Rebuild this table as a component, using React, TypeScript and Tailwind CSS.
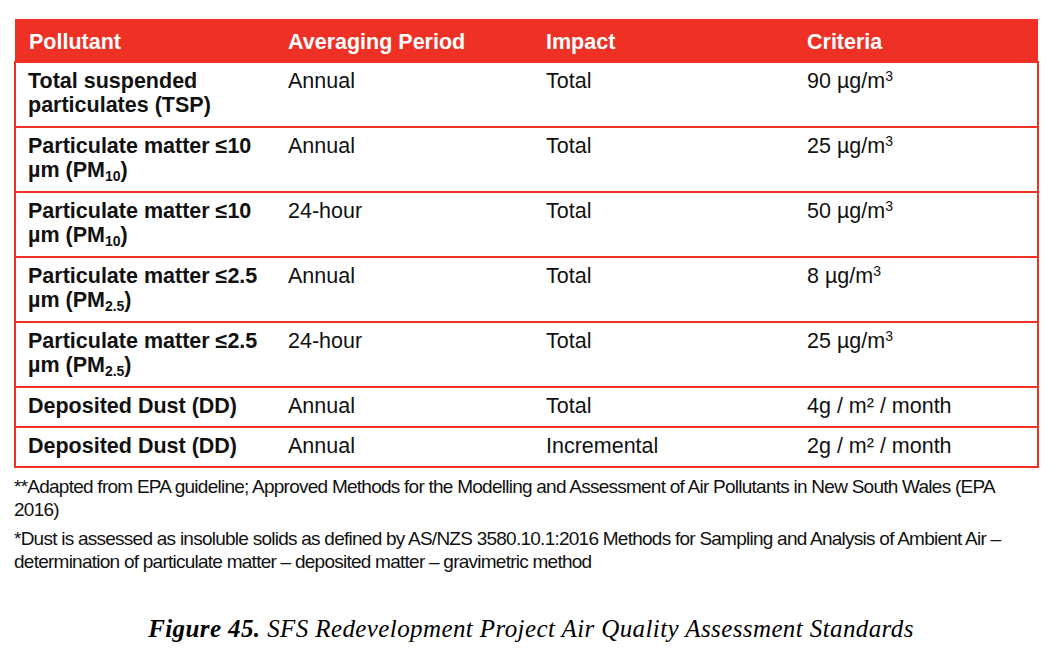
const rows = [
  { pollutant: <>Total suspended<br />particulates (TSP)</>, period: "Annual", impact: "Total", criteria: <>90 µg/m<sup className="text-[14px]">3</sup></>, tall: true },
  { pollutant: <>Particulate matter ≤10<br />µm (PM<sub className="text-[14px]">10</sub>)</>, period: "Annual", impact: "Total", criteria: <>25 µg/m<sup className="text-[14px]">3</sup></>, tall: true },
  { pollutant: <>Particulate matter ≤10<br />µm (PM<sub className="text-[14px]">10</sub>)</>, period: "24-hour", impact: "Total", criteria: <>50 µg/m<sup className="text-[14px]">3</sup></>, tall: true },
  { pollutant: <>Particulate matter ≤2.5<br />µm (PM<sub className="text-[14px]">2.5</sub>)</>, period: "Annual", impact: "Total", criteria: <>8 µg/m<sup className="text-[14px]">3</sup></>, tall: true },
  { pollutant: <>Particulate matter ≤2.5<br />µm (PM<sub className="text-[14px]">2.5</sub>)</>, period: "24-hour", impact: "Total", criteria: <>25 µg/m<sup className="text-[14px]">3</sup></>, tall: true },
  { pollutant: <>Deposited Dust (DD)</>, period: "Annual", impact: "Total", criteria: <>4g / m² / month</>, tall: false },
  { pollutant: <>Deposited Dust (DD)</>, period: "Annual", impact: "Incremental", criteria: <>2g / m² / month</>, tall: false },
];

export default function App() {
  return (
    <div className="w-[1055px] h-[652px] bg-white overflow-hidden pt-[19px] pl-[14px] text-[#111]">
      <table
        className="w-[1023px] border-collapse table-fixed text-[21.5px] leading-[24px]"
        style={{ fontFamily: '"Liberation Sans", Arial, sans-serif' }}
      >
        <colgroup>
          <col className="w-[259px]" />
          <col className="w-[258px]" />
          <col className="w-[261px]" />
          <col className="w-[245px]" />
        </colgroup>
        <thead>
          <tr className="bg-[#ee3124] text-white font-bold h-[43px]">
            <th className="text-left font-bold pl-[14px] pt-[4px] align-middle">Pollutant</th>
            <th className="text-left font-bold pl-[14px] pt-[4px] align-middle">Averaging Period</th>
            <th className="text-left font-bold pl-[14px] pt-[4px] align-middle">Impact</th>
            <th className="text-left font-bold pl-[14px] pt-[4px] align-middle">Criteria</th>
          </tr>
        </thead>
        <tbody>
          {rows.map((r, i) => (
            <tr
              key={i}
              className={`border-2 border-[#ee3124] align-top ${r.tall ? "h-[65px]" : "h-[40px]"}`}
            >
              <td className="pl-[12px] pt-[6px] font-bold">{r.pollutant}</td>
              <td className="pl-[14px] pt-[6px]">{r.period}</td>
              <td className="pl-[14px] pt-[6px]">{r.impact}</td>
              <td className="pl-[14px] pt-[6px]">{r.criteria}</td>
            </tr>
          ))}
        </tbody>
      </table>

      <div
        className="mt-[7px] w-[1040px] text-[19px] leading-[23px] tracking-[-0.75px] text-[#111] whitespace-nowrap"
        style={{ fontFamily: '"Liberation Sans", Arial, sans-serif' }}
      >
        <p>
          **Adapted from EPA guideline; Approved Methods for the Modelling and Assessment of Air Pollutants in New South Wales (EPA
          <br />
          2016)
        </p>
        <p className="mt-[6px]">
          *Dust is assessed as insoluble solids as defined by AS/NZS 3580.10.1:2016 Methods for Sampling and Analysis of Ambient Air –
          <br />
          determination of particulate matter – deposited matter – gravimetric method
        </p>
      </div>

      <p
        className="mt-[42px] w-[1034px] text-center italic text-[25px] leading-[28px] tracking-[0.4px] text-black"
        style={{ fontFamily: '"Liberation Serif", "Times New Roman", serif' }}
      >
        <span className="font-bold">Figure 45.</span> SFS Redevelopment Project Air Quality Assessment Standards
      </p>
    </div>
  );
}
